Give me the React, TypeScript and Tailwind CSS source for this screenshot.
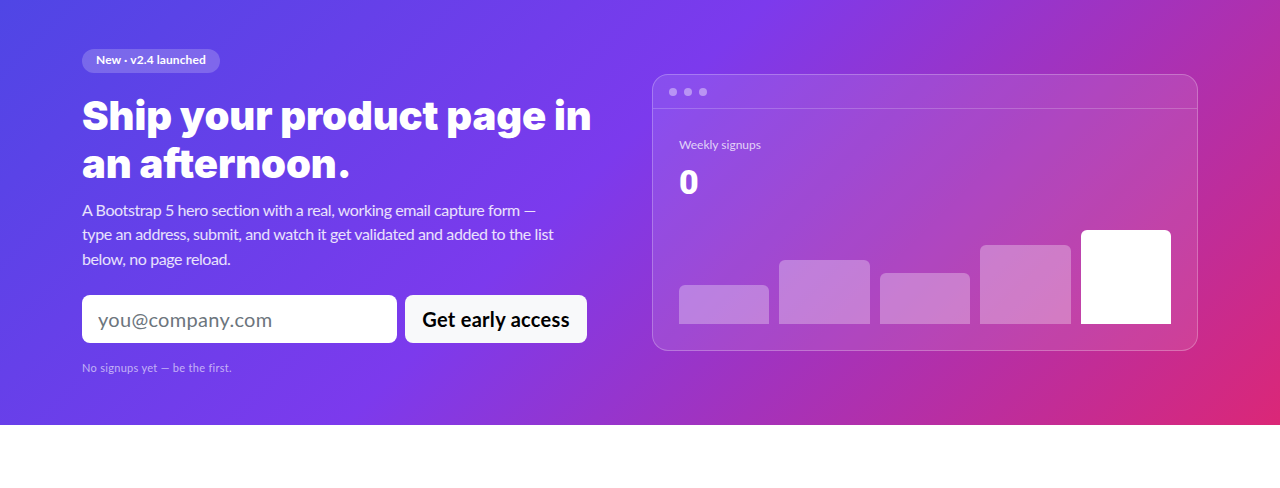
import React from "react";

const bars = [
  { h: 39, c: "bg-white/30" },
  { h: 64, c: "bg-white/30" },
  { h: 51, c: "bg-white/30" },
  { h: 79, c: "bg-white/30" },
  { h: 94, c: "bg-white" },
];

export default function App() {
  return (
    <div className="min-h-[488px] bg-white" style={{ fontFamily: "Lato, 'Noto Sans', sans-serif" }}>
      <section className="h-[425px] bg-[linear-gradient(135deg,#4f46e5_0%,#7c3aed_45%,#db2777_100%)] flex items-center">
        <div className="w-[1140px] mx-auto grid grid-cols-2 items-center">
          <div className="px-3 pb-[4px]">
            <span className="inline-block rounded-full bg-white/20 px-[14px] pt-[4px] pb-[6px] text-[12px] font-bold leading-[14px] text-white tracking-[0.1px]">
              New · v2.4 launched
            </span>
            <h1
              className="mt-[19px] text-[40px] leading-[48px] font-black text-white tracking-[-0.1px]"
              style={{ fontFamily: "Inter, sans-serif" }}
            >
              Ship your product page in an afternoon.
            </h1>
            <p className="mt-[10px] max-w-[480px] text-[16px] leading-[24.5px] text-white/85 tracking-[-0.4px]">
              A Bootstrap 5 hero section with a real, working email capture form — type an address, submit, and watch it get validated and added to the list below, no page reload.
            </p>
            <form className="mt-[24px] flex gap-2" onSubmit={(e) => e.preventDefault()}>
              <input
                type="email"
                placeholder="you@company.com"
                className="w-[315px] h-[48px] rounded-[8px] bg-white px-4 text-[20px] text-gray-900 placeholder:text-[#6c757d] outline-none tracking-[0.3px]"
              />
              <button type="submit" className="w-[182px] h-[48px] rounded-[8px] bg-[#f8f9fa] text-[20px] font-bold text-black tracking-[0.3px]">
                Get early access
              </button>
            </form>
            <p className="mt-[18px] text-[11px] leading-[14px] text-white/60 tracking-[0.3px]">No signups yet — be the first.</p>
          </div>
          <div className="px-3">
            <div className="h-[277px] rounded-[16px] border border-white/25 bg-white/10 flex flex-col overflow-hidden">
              <div className="h-[34px] border-b border-white/20 flex items-center gap-[7px] pl-4">
                <span className="w-2 h-2 rounded-full bg-white/40" />
                <span className="w-2 h-2 rounded-full bg-white/40" />
                <span className="w-2 h-2 rounded-full bg-white/40" />
              </div>
              <div className="flex-1 flex flex-col px-[26px] pt-[28px] pb-[26px]">
                <div className="text-[12px] leading-[16px] text-white/75">Weekly signups</div>
                <div
                  className="mt-[11px] text-[34px] leading-[36px] font-black text-white"
                  style={{ fontFamily: "Roboto, sans-serif" }}
                >
                  0
                </div>
                <div className="mt-auto flex items-end gap-[10px] h-[96px]">
                  {bars.map((b, i) => (
                    <div key={i} className={`flex-1 rounded-t-[6px] ${b.c}`} style={{ height: b.h }} />
                  ))}
                </div>
              </div>
            </div>
          </div>
        </div>
      </section>
    </div>
  );
}
